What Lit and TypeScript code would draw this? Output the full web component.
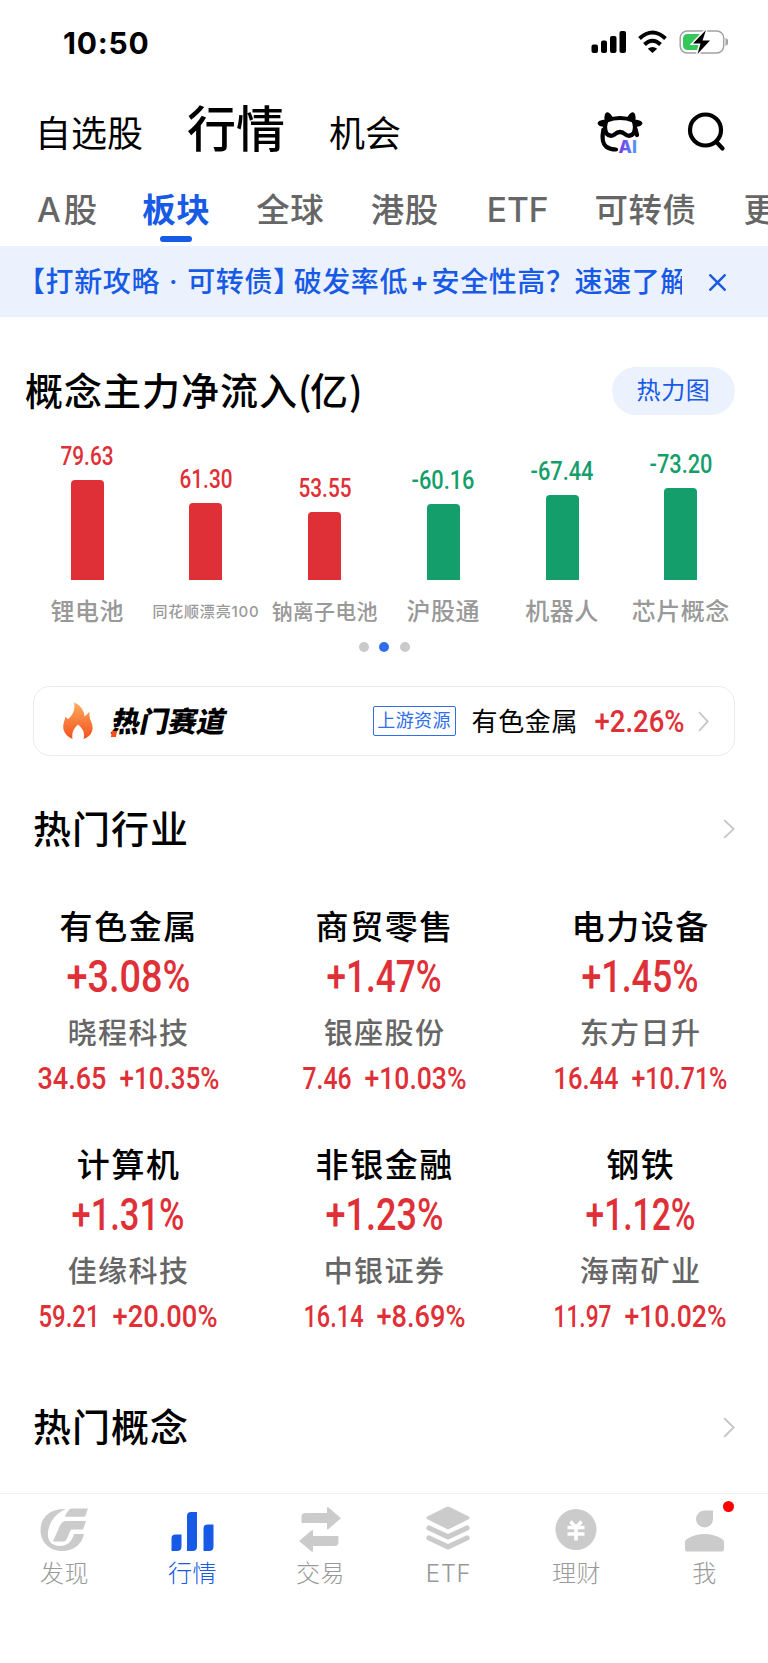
import { LitElement, html, css, svg, nothing } from "lit";
import { customElement, property } from "lit/decorators.js";

/** A condensed numeral run, set to an exact advance width. Box height = cap height. */
@customElement("fig-text")
class FigText extends LitElement {
  static styles = css`
    :host { display: inline-block; line-height: 0; }
    svg { display: block; overflow: visible; }
    text { font-family: Roboto, "Open Sans", sans-serif; font-weight: 500; fill: currentColor; }
  `;
  @property() text = "";
  @property({ type: Number }) w = 50;
  @property({ type: Number }) h = 18;
  render() {
    return html`<svg width=${this.w} height=${this.h}>
      <text x="-0.5" y=${this.h} font-size=${this.h / 0.711} textLength=${this.w + 1} lengthAdjust="spacingAndGlyphs">${this.text}</text>
    </svg>`;
  }
}

const bars = [
  { v: "79.63", n: "锂电池", s: "", w: 52 },
  { v: "61.30", n: "同花顺漂亮100", s: "xs", w: 52 },
  { v: "53.55", n: "钠离子电池", s: "sm", w: 52 },
  { v: "-60.16", n: "沪股通", s: "", w: 62 },
  { v: "-67.44", n: "机器人", s: "", w: 62 },
  { v: "-73.20", n: "芯片概念", s: "", w: 62 },
];
const sectors = [
  ["有色金属", "+3.08%", 123, "晓程科技", "34.65", 68, "+10.35%", 99],
  ["商贸零售", "+1.47%", 114, "银座股份", "7.46", 48, "+10.03%", 101],
  ["电力设备", "+1.45%", 116, "东方日升", "16.44", 64, "+10.71%", 95],
  ["计算机", "+1.31%", 112, "佳缘科技", "59.21", 60, "+20.00%", 104],
  ["非银金融", "+1.23%", 117, "中银证券", "16.14", 59, "+8.69%", 88],
  ["钢铁", "+1.12%", 109, "海南矿业", "11.97", 57, "+10.02%", 101],
] as const;

const chevron = (w: number, h: number) => html`<svg class="chev" width=${w} height=${h} viewBox="0 0 12 22" preserveAspectRatio="none">
  <path d="M1.2 1.2 10.6 11 1.2 20.8" fill="none" stroke="#c6c6c6" stroke-width="1.9" /></svg>`;

const icons = [
  svg`<path d="M27 2C13 1 1.500 9 1.500 23c0 12 9 21 21.500 21 12 0 20-7 22-17H35c-2 7-6 12-14 12-8 0-13-5-12-14C10 15 17 6 27 2Z"/>
      <path d="M32 1.5h17l-2.6 7.2q-.5 1-1.6 1H26q2-6 6-8.2Z"/><path d="M27 14h20l-2.6 7.5q-.5 1-1.6 1H32l-4.5 10q-.8 2-3 2H14l7-16q2-4.500 6-4.500Z"/>`,
  svg`<path d="M4.500 44V31.500q0-4 4-4h6v12q0 4.500-4.500 4.500ZM20 44V9q0-4 4-4h6v34.500q0 4.500-4.500 4.500ZM36.500 44V21.500q0-4 4-4h6v22q0 4.500-4.500 4.500Z"/>`,
  svg`<path d="M6.500 16V10q0-4 4-4H32V1q0-1.500 1.500-.5L46 11.200 33.500 22q-1.500 1-1.500-.5V16ZM43.500 29v6q0 4-4 4H18v5q0 1.500-1.500.5L4 34l12.500-10.500q1.500-1 1.500.5v5Z"/>`,
  svg`<g stroke="#cbcbcb" stroke-linejoin="round"><path stroke-width="3" d="M25 .8 45 10.800 25 20.800 5 10.800Z"/>
      <path fill="none" stroke-width="5.200" stroke-linecap="round" d="M6 21 25 29.800 44 21M6 31 25 39.800 44 31"/></g>`,
  svg`<circle cx="25" cy="22.500" r="20.500"/><path fill="none" stroke="#fff" stroke-width="3.600" d="M19.500 14.500 25 20.500 30.500 14.500M16.500 20.500h17M16.500 27h17M25 20v13.500"/>`,
  svg`<path transform="translate(4.500 0)" d="M20.500 3.500H29.500V12.500a8.500 8.500 0 1 1-9-9ZM1.500 35q0-2 2-3 8-5 17.500-5t17.500 5q2 1 2 3v7.500q0 2-2 2h-35q-2 0-2-2Z"/>`,
];

@customElement("app-root")
class AppRoot extends LitElement {
  static styles = css`
    :host { display: block; width: 768px; height: 1663px; overflow: hidden; background: #fff; color: #000;
      font-family: Inter, "Noto Sans CJK SC", sans-serif; font-size: 24px; line-height: 1; white-space: nowrap; }
    * { box-sizing: border-box; }
    svg { display: block; flex: none; }
    .status { height: 84px; display: flex; justify-content: space-between; align-items: center; padding: 0 40px 0 63px; }
    .time { font-size: 30px; font-weight: 700; letter-spacing: .8px; padding-top: 1px; }
    .status .right { display: flex; align-items: center; }
    .nav { height: 98px; display: flex; justify-content: space-between; align-items: center; padding: 0 43px 0 35px; }
    .nav .links { display: flex; align-items: baseline; font-size: 36px; margin-top: -6px; }
    .nav .on { font-size: 49px; line-height: 54px; font-weight: 500; margin: 0 44px 0 44px; }
    .nav .tools { display: flex; gap: 44px; align-items: center; margin-top: -2px; }
    .tools svg { overflow: visible; }
    .tabs { height: 64px; display: flex; padding-left: 37px; font-size: 33.5px; letter-spacing: .5px; font-weight: 500; color: #666; overflow: hidden; }
    .tab { display: flex; flex-direction: column; align-items: center; flex: none; height: 60px; padding-top: 12px; justify-content: space-between; }
    .tab.on { color: #175ae6; font-weight: 700; }
    .tab.on::after { content: ""; width: 32px; height: 6px; border-radius: 3px; background: #175ae6; }
    .wide { letter-spacing: 3px; }
    .tight { letter-spacing: 0; }
    .notice { height: 71px; background: #ebf1fd; color: #175ae6; display: flex; align-items: center; justify-content: space-between; padding: 1px 42px 0 17px; font-size: 28px; font-weight: 500; letter-spacing: .6px; }
    .notice .msg { width: 665px; overflow: hidden; display: flex; line-height: 40px; }
    .notice .dotc { margin: 0 1px; }
    .notice .close { margin-right: -8px; }
    .notice .plus { padding: 0 2px 0 2px; font-weight: 600; }
    .head { display: flex; align-items: center; justify-content: space-between; font-size: 38px; font-weight: 500; letter-spacing: 1px; padding: 0 33px; }
    .head.flow { height: 148px; padding-left: 25px; }
    .head.flow > span:first-child { margin-top: -2px; }
    .paren { font-family: "Noto Sans CJK SC", sans-serif; letter-spacing: -1.5px; }
    .pill { width: 123px; height: 48px; border-radius: 24px; background: #ebf1fd; color: #175ae6; font-size: 24px; font-weight: 400; letter-spacing: .6px; display: grid; place-items: center; }
    .chart { display: grid; grid-template-columns: repeat(6, 118.7px); justify-content: center; height: 138px; margin-top: -23.5px; }
    .chart.labels { height: auto; margin-top: 0; }
    .col { display: flex; flex-direction: column; align-items: center; justify-content: flex-end; color: #e03037; }
    .col.dn { color: #149e6b; }
    .bar { width: 33px; margin-top: 15px; border-radius: 4px 4px 0 0; background: currentColor; }
    .lab { height: 24px; margin-top: 20px; line-height: 24px; color: #999; letter-spacing: .5px; font-weight: 500; }
    .lab.xs { font-size: 15px; letter-spacing: .8px; }
    .lab.sm { font-size: 21px; letter-spacing: .2px; }
    .dots { display: flex; justify-content: center; gap: 10.5px; margin-top: 18.5px; }
    .dots i { width: 10px; height: 10px; border-radius: 5px; background: #cacaca; }
    .dots i.on { background: #2f6fec; }
    .card { margin: 34px 33px 0; height: 70px; border: 1.5px solid #ebebeb; border-radius: 17px; display: flex; align-items: center; padding: 0 25px 0 29px; }
    .race { display: flex; align-items: center; flex: 1; font-size: 28.5px; font-weight: 700; }
    .race b { transform: skewX(-12deg); margin: 2px 0 0 19px; position: relative; }
    .race b::before { content: ""; position: absolute; left: 1.5px; bottom: 0; width: 5px; height: 6px; background: #fa4d1c; }
    .tag { width: 83px; height: 30px; border: 1.5px solid #2f6fec; border-radius: 2px; color: #2f6fec; font-size: 18px; letter-spacing: .4px; display: grid; place-items: center; margin-right: 16px; }
    .card .nm { font-size: 26px; letter-spacing: .6px; margin: 1px 17px 0 0; }
    .red { color: #e03037; }
    .card .chev { margin-left: 14px; }
    .head.ind { height: 146px; }
    .grid { display: grid; grid-template-columns: repeat(3, 256px); grid-auto-rows: 237.5px; margin-top: 8px; }
    .cell { display: flex; flex-direction: column; align-items: center; color: #e03037; }
    .cell .n { color: #000; font-size: 33px; line-height: 34px; letter-spacing: 1.6px; font-weight: 500; margin-bottom: 17px; padding-left: 1.5px; }
    .cell .s { color: #666; font-size: 29px; line-height: 30px; letter-spacing: 1.4px; font-weight: 500; margin: 27px 0 18px; padding-left: 1px; }
    .cell .l { display: flex; gap: 14px; }
    .head.con { height: 126px; margin-top: -21px; }
    .bot { display: grid; grid-template-columns: repeat(6, 128px); height: 170px; margin-top: 3px; border-top: 1.5px solid #f1f1f1; }
    .it { display: flex; flex-direction: column; align-items: center; color: #999; fill: #cbcbcb; letter-spacing: .6px; padding-top: 13px; gap: 9px; position: relative; font-weight: 300; }
    .it span { padding-left: 1px; }
    .it.on { color: #175ae6; fill: #175ae6; }
    .it .dot { position: absolute; left: 83px; top: 7px; width: 11px; height: 11px; padding: 0; border-radius: 6px; background: #f00; }
  `;
  render() {
    return html`
      <div class="status"><div class="time">10:50</div>
        <div class="right">
          <svg width="138" height="26" viewBox="590 29 138 26">
            <rect x="591.5" y="44.5" width="6.5" height="8.5" rx="2"/><rect x="601" y="40.5" width="6" height="12.5" rx="2"/><rect x="610" y="36" width="6.5" height="17" rx="2"/><rect x="619.5" y="31" width="6.5" height="22" rx="2"/>
            <g fill="none" stroke="#000" stroke-width="4"><path d="M639.500 38.500q13-12 26 0"/><path d="M644.500 44.500q8-7.500 16 0"/></g><path d="M647.800 48.800q4.700-3.500 9.400 0l-4.700 4.200Z"/>
            <rect x="680.200" y="31" width="43.500" height="22" rx="7" fill="none" stroke="#a2a2a2" stroke-width="1.500"/><path d="M725.500 38q3 1 3 4t-3 4Z" fill="#a2a2a2"/>
            <rect x="683" y="34" width="19" height="16" rx="4.500" fill="#34c759"/>
            <path d="M706 30 693 43.500h7.500L697.500 54 710 40.500h-7.500Z" stroke="#fff" stroke-width="3" paint-order="stroke"/>
          </svg></div></div>
      <div class="nav">
        <div class="links"><span>自选股</span><span class="on">行情</span><span>机会</span></div>
        <div class="tools">
          <svg width="48" height="44" viewBox="596 111 48 44">
            <defs><linearGradient id="ai" x1="0" x2="1"><stop stop-color="#7a35ea"/><stop offset="1" stop-color="#4f9bff"/></linearGradient></defs>
            <g fill="none" stroke="#000" stroke-width="4.2" stroke-linecap="round" stroke-linejoin="round">
            <path d="M606.500 134.500Q603.500 128 606.500 121.500Q620 116.500 633.500 121.500Q636.500 128 633.500 134.500Q630 138.500 625.500 135.500Q620 130.500 614.500 135.500Q610 138.500 606.500 134.500Z"/>
            <path d="M603.300 131Q601 143 606 147.500Q610 150.500 616 150.500M635.500 130 637 136"/></g>
            <path d="M604.500 121Q604 113 607.500 113.200Q610.500 113.800 613 119ZM635.500 121Q636 113 632.500 113.200Q629.500 113.800 627 119ZM606 120.500Q597.500 121 597.500 124.500Q598.500 127.500 604 128ZM634 120.500Q642.500 121 642.500 124.500Q641.500 127.500 636 128Z"/>
            <text x="618.500" y="154" font-family="Inter" font-weight="800" font-size="17.500" fill="url(#ai)">AI</text></svg>
          <svg width="37" height="44" viewBox="688 110 37 44"><g fill="none" stroke="#000" stroke-width="4.2" stroke-linecap="round"><circle cx="705.500" cy="130" r="15.500"/><path d="M716.500 142 722.500 148.500"/></g></svg>
        </div></div>
      <div class="tabs">
        ${([["A股", 0, "wide"], ["板块", 42, "on"], ["全球", 46, ""], ["港股", 46.5, ""], ["ETF", 48, "tight"], ["可转债", 46, ""], ["更多", 47, ""]] as [string, number, string][]).map(([t, m, c]) => html`<div class="tab ${c}" style="margin-left:${m}px">${t}</div>`)}
      </div>
      <div class="notice"><div class="msg"><span>【打新攻略</span><span class="dotc">&nbsp;·&nbsp;</span><span>可转债</span><span class="close">】</span><span>破发率低</span><span class="plus">+</span><span>安全性高？速速了解</span></div>
        <svg width="17" height="17" viewBox="0 0 16 16"><path d="M.5.5l15 15M15.500.5l-15 15" stroke="#175ae6" stroke-width="2.300"/></svg></div>
      <div class="head flow"><span>概念主力净流入<span class="paren">(</span>亿<span class="paren">)</span></span><span class="pill">热力图</span></div>
      <div class="chart">${bars.map(b => html`<div class="col ${b.v[0] === "-" ? "dn" : ""}">
        <fig-text text=${b.v} w=${b.w} h="18"></fig-text><div class="bar" style="height:${Math.abs(+b.v) * 1.256}px"></div></div>`)}</div>
      <div class="chart labels">${bars.map(b => html`<div class="col"><div class="lab ${b.s}">${b.n}</div></div>`)}</div>
      <div class="dots"><i></i><i class="on"></i><i></i></div>
      <div class="card">
        <div class="race"><svg width="30" height="38" viewBox="0 0 30 38"><defs><linearGradient id="fl" x1="0" x2="0" y1="0" y2="1"><stop stop-color="#ffab5e"/><stop offset="1" stop-color="#f4511e"/></linearGradient></defs>
          <path fill="url(#fl)" d="M11 .5c7 3 10 8 10.500 14q3-2 5-5-.5 6 1.500 10c4 8 0 15-7.500 17.500q2.500-8-5.500-14.500-7 6-5.500 14.500C2 34-1.500 27 1 20q1-3 1.500-5.500 1.500 2.500 3 2.500c5-5 7-10 5.500-16.500Z"/></svg><b>热门赛道</b></div>
        <span class="tag">上游资源</span><span class="nm">有色金属</span><fig-text class="red" text="+2.26%" w="89" h="22"></fig-text>${chevron(11, 21)}
      </div>
      <div class="head ind"><span>热门行业</span>${chevron(12, 20)}</div>
      <div class="grid">${sectors.map(s => html`<div class="cell"><div class="n">${s[0]}</div><fig-text text=${s[1]} w=${s[2]} h="31"></fig-text>
        <div class="s">${s[3]}</div><div class="l"><fig-text text=${s[4]} w=${s[5]} h="22"></fig-text><fig-text text=${s[6]} w=${s[7]} h="22"></fig-text></div></div>`)}</div>
      <div class="head con"><span>热门概念</span>${chevron(12, 21)}</div>
      <div class="bot">${["发现", "行情", "交易", "ETF", "理财", "我"].map((t, i) => html`<div class="it ${i === 1 ? "on" : ""}">
        <svg width="50" height="46" viewBox="0 0 50 46">${icons[i]}</svg><span>${t}</span>${i === 5 ? html`<span class="dot"></span>` : nothing}</div>`)}</div>
    `;
  }
}
